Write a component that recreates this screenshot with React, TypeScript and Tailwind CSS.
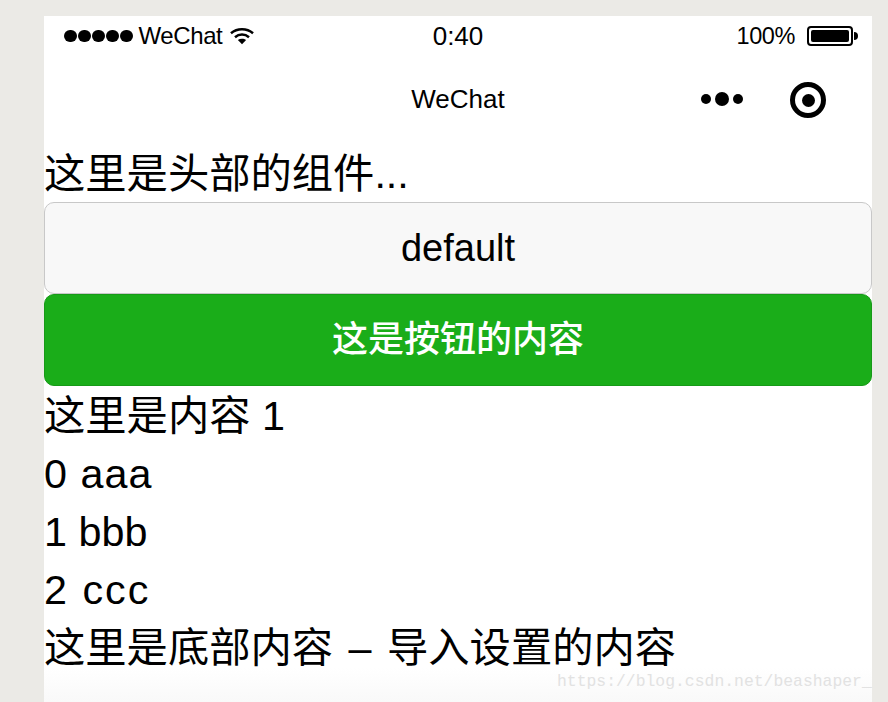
const font = "font-['Liberation_Sans','Noto_Sans_CJK_SC',sans-serif]"

function Signal() {
    return (
        <div className="flex items-center gap-[1.5px]">
            {[0, 1, 2, 3, 4].map((i) => (
                <div key={i} className="w-[12.5px] h-[12.5px] rounded-full bg-black" />
            ))}
        </div>
    )
}

function Wifi() {
    return (
        <svg width="24" height="18" viewBox="0 0 25 18" fill="none" stroke="black" strokeWidth="2.6">
            <path d="M1 6.2C7.5 0.6 17.5 0.6 24 6.2" />
            <path d="M5.2 10.3C9.5 6.6 15.5 6.6 19.8 10.3" />
            <path d="M8.2 13.2L12.5 17.6L16.8 13.2C14.4 11.5 10.6 11.5 8.2 13.2Z" fill="black" stroke="none" />
        </svg>
    )
}

function Battery() {
    return (
        <div className="flex items-center">
            <div className="w-[46px] h-[20px] rounded-[4px] border-2 border-black p-[2px]">
                <div className="w-full h-full rounded-[2px] bg-black" />
            </div>
            <div className="w-[4px] h-[8px] rounded-r-full bg-black ml-[1px]" />
        </div>
    )
}

function Line({ children }: { children: React.ReactNode }) {
    return <div className="h-[58px] leading-[60px] text-[41.3px] text-black whitespace-nowrap">{children}</div>
}

export default function App() {
    return (
        <div className={`relative w-[888px] h-[702px] overflow-hidden bg-[#ebeae6] pt-4 pl-[44px] ${font}`}>
            <div className="w-[828px] h-[686px] bg-gradient-to-b from-white from-[95%] to-[#f9f9f9]">
                <div className="flex items-center justify-between h-[40px] pl-[20px] pr-[14px]">
                    <div className="flex items-center gap-[6px] w-[294px]">
                        <Signal />
                        <span className="text-[24px] tracking-[-0.4px] text-black mr-[2px]">WeChat</span>
                        <Wifi />
                    </div>
                    <span className="text-[26px] text-black">0:40</span>
                    <div className="flex items-center justify-end gap-[12px] w-[300px]">
                        <span className="text-[23.5px] tracking-[-0.4px] text-black pt-[1px]">100%</span>
                        <Battery />
                    </div>
                </div>
                <div className="relative flex items-center justify-center h-[88px] pb-[2px]">
                    <span className="text-[26px] text-black">WeChat</span>
                    <div className="absolute left-[657px] top-[36px] flex items-center gap-[4px]">
                        <div className="w-[10px] h-[10px] rounded-full bg-black" />
                        <div className="w-[14px] h-[14px] rounded-full bg-black" />
                        <div className="w-[10px] h-[10px] rounded-full bg-black" />
                    </div>
                    <div className="absolute left-[746px] top-[26px] w-[36px] h-[36px] rounded-full border-[5px] border-black flex items-center justify-center">
                        <div className="w-[13px] h-[13px] rounded-full bg-black" />
                    </div>
                </div>
                <Line>这里是头部的组件...</Line>
                <button className="block w-full h-[92px] rounded-[10px] border border-[#c8c8c8] bg-[#f8f8f8] text-[38px] text-black">
                    default
                </button>
                <button className="block w-full h-[92px] rounded-[10px] border border-[#179a18] bg-[#1aad19] text-[36px] font-medium text-white">
                    这是按钮的内容
                </button>
                <Line>这里是内容 1</Line>
                <Line>
                    <span className="tracking-[1px]">0 aaa</span>
                </Line>
                <Line>1 bbb</Line>
                <Line>
                    <span className="tracking-[2px]">2 ccc</span>
                </Line>
                <Line>
                    这里是底部内容<span className="mx-[4px]"> – </span>导入设置的内容
                </Line>
            </div>
            <div className="absolute left-[557px] top-[671px] text-[16.4px] leading-[22px] text-[#e2e2e2] whitespace-nowrap font-['Liberation_Mono',monospace]">
                https://blog.csdn.net/beashaper_
            </div>
        </div>
    )
}
